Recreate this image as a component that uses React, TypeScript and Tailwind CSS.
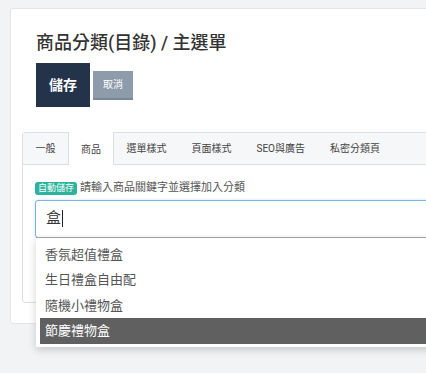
import React from 'react';

const tabs = ['一般', '商品', '選單樣式', '頁面樣式', 'SEO與廣告', '私密分類頁'];
const options = ['香氛超值禮盒', '生日禮盒自由配', '隨機小禮物盒', '節慶禮物盒'];

export default function App() {
  const activeTab = 1;
  const activeOption = 3;

  return (
    <div
      className="w-[426px] h-[373px] overflow-hidden bg-[#f2f3f5] pt-[8px] pl-[10px]"
      style={{ fontFamily: 'Roboto, "Noto Sans CJK TC", sans-serif' }}
    >
      <div className="w-[460px] h-[316px] bg-white border border-[#e4e5e7] rounded-[3px] px-[11px] pt-[23px]">
        {/* Header */}
        <div className="px-[14px]">
          <h1 className="text-[18px] leading-[22px] font-medium text-[#333]">商品分類(目錄) / 主選單</h1>
          <div className="flex items-center gap-[3px] mt-[9px]">
            <button className="w-[54px] h-[44px] bg-[#22334a] text-white text-[14px] font-bold">儲存</button>
            <button className="w-[40px] h-[29px] bg-[#8d9bab] border-b-2 border-[#7b8898] text-white text-[10px]">取消</button>
          </div>
        </div>

        {/* Tabs */}
        <div className="relative mt-[25px] border border-[#dcdee2] rounded-[3px] h-[171px]">
          <div className="flex h-[32px] bg-[#f6f7f9] border-b border-[#dcdee2]">
            {tabs.map((tab, i) => (
              <div
                key={tab}
                className={`flex items-center text-[10px] text-[#444] ${
                  i === activeTab ? 'px-[12px] bg-white border-x border-[#dcdee2] h-[33px] -mt-px pt-px' : 'px-[12.5px]'
                }`}
              >
                {tab}
              </div>
            ))}
          </div>

          <div className="px-[12px] pt-[15px]">
            <div className="flex items-center gap-[3px]">
              <span className="bg-[#2bb39b] text-white text-[9px] leading-[13px] px-[3px] rounded-[3px]">自動儲存</span>
              <span className="text-[11px] text-[#555]">請輸入商品關鍵字並選擇加入分類</span>
            </div>

            <div className="relative mt-[3px]">
              <div className="h-[38px] border border-[#74b6e6] rounded-[3px] flex items-center pl-[10px] shadow-[0_0_3px_rgba(102,175,233,0.35)]">
                <span className="text-[15px] text-[#333]">盒</span>
                <span className="w-px h-[17px] bg-[#222] ml-px" />
              </div>

              {/* Autocomplete dropdown */}
              <div className="absolute left-px top-[37px] w-[420px] bg-white border-t border-[#a0a0a0] shadow-[0_3px_8px_rgba(0,0,0,0.18)] pl-[4px] pt-[4px] pb-[3px]">
                {options.map((opt, i) => (
                  <div
                    key={opt}
                    className={`h-[25.5px] flex items-center pl-[5px] text-[13px] ${
                      i === activeOption ? 'bg-[#606060] text-white' : 'text-[#555]'
                    }`}
                  >
                    {opt}
                  </div>
                ))}
              </div>
            </div>
          </div>
        </div>
      </div>
    </div>
  );
}
